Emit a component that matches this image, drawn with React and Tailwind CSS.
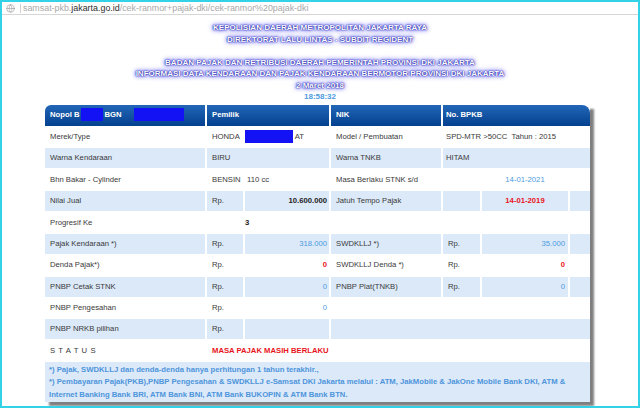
import React from "react";
import { Globe } from "lucide-react";

const GRID =
  "grid grid-cols-[160px_36px_84px_110px_37px_86px_20px] gap-x-[2px]";

function C({ span = 1, blue, children, align = "left", cls = "" }) {
  const spanCls = {
    1: "col-span-1",
    2: "col-span-2",
    3: "col-span-3",
    4: "col-span-4",
    6: "col-span-6",
  }[span];
  const alignCls =
    align === "right"
      ? "justify-end pr-[2px]"
      : align === "center"
      ? "justify-center"
      : "justify-start pl-[5px]";
  return (
    <div
      className={`${spanCls} h-[20px] flex items-center whitespace-nowrap ${alignCls} ${
        blue ? "bg-[#dce9f8]" : "bg-white"
      } ${cls}`}
    >
      {children}
    </div>
  );
}

function Redact({ w }) {
  return <span className="inline-block h-[13px] bg-[#1212f5]" style={{ width: w }} />;
}

export default function App() {
  const blueV = "text-[#4c9be0]";
  const red = "text-[#e8141c] font-bold";
  return (
    <div className="w-[640px] h-[408px] border-2 border-[#34d2e6] bg-white overflow-hidden font-['Liberation_Sans',Arial,sans-serif] text-[#3a3a3a]">
      {/* address bar */}
      <div className="h-[13px] border-b border-[#d6d6d6] flex items-center text-[8.9px] leading-none">
        <Globe size={9} className="ml-[4px] text-[#9a9a9a]" strokeWidth={1.6} />
        <span className="ml-[5px] mr-[2px] w-px h-[9px] bg-[#d0d0d0]" />
        <span className="text-[#a8a8a8]">
          samsat-pkb.<span className="text-[#2e2e2e]">jakarta.go.id</span>/cek-ranmor+pajak-dki/cek-ranmor%20pajak-dki
        </span>
      </div>

      {/* title */}
      <div className="pt-[7px] flex flex-col items-center text-[8px] leading-[11.5px] font-bold text-white [text-shadow:0_0_1px_#0a0a80,0_0_2px_#1a1ab8,0_0_4px_#4040f0,0_0_6px_#8080ff]">
        <div>KEPOLISIAN DAERAH METROPOLITAN JAKARTA RAYA</div>
        <div>DIREKTORAT LALU LINTAS - SUBDIT REGIDENT</div>
        <div className="h-[11.5px]" />
        <div>BADAN PAJAK DAN RETRIBUSI DAERAH PEMERINTAH PROVINSI DKI JAKARTA</div>
        <div>INFORMASI DATA KENDARAAN DAN PAJAK KENDARAAN BERMOTOR PROVINSI DKI JAKARTA</div>
        <div>2 Maret 2018</div>
        <div className="text-[#4c9be0] [text-shadow:none]">18:58:32</div>
      </div>

      {/* table */}
      <div className="ml-[43px] mt-[2px] w-[545px] bg-white shadow-[4px_4px_2px_rgba(0,0,0,0.5)] text-[7.7px] leading-none">
        {/* header */}
        <div className={`${GRID} h-[21px] text-white font-bold`}>
          <div className="col-span-1 flex items-center pl-[5px] rounded-tl-[6px] bg-linear-to-b from-[#2266b8] to-[#03418e]">
            Nopol B
            <span className="ml-[2px]"><Redact w={22} /></span>
            <span className="ml-[1px]">BGN</span>
            <span className="ml-[12px]"><Redact w={50} /></span>
          </div>
          <div className="col-span-2 flex items-center pl-[5px] bg-linear-to-b from-[#2266b8] to-[#03418e]">Pemilik</div>
          <div className="col-span-1 flex items-center pl-[5px] bg-linear-to-b from-[#2266b8] to-[#03418e]">NIK</div>
          <div className="col-span-3 flex items-center pl-[3px] rounded-tr-[8px] bg-linear-to-b from-[#2266b8] to-[#03418e]">No. BPKB</div>
        </div>

        <div className="flex flex-col gap-y-[1.375px] pt-[1.375px]">
          <div className={GRID}>
            <C>Merek/Type</C>
            <C span={2}>
              HONDA<span className="ml-[5px] mr-[2px]"><Redact w={48} /></span>AT
            </C>
            <C>Model / Pembuatan</C>
            <C span={3} cls="!pl-[3px]">SPD-MTR &gt;50CC&nbsp;&nbsp;Tahun : 2015</C>
          </div>
          <div className={GRID}>
            <C blue>Warna Kendaraan</C>
            <C blue span={2}>BIRU</C>
            <C blue>Warna TNKB</C>
            <C blue span={3} cls="!pl-[3px]">HITAM</C>
          </div>
          <div className={GRID}>
            <C>Bhn Bakar - Cylinder</C>
            <C span={2}>BENSIN&nbsp;&nbsp;&nbsp;110 cc</C>
            <C>Masa Berlaku STNK s/d</C>
            <C />
            <C align="center" cls={blueV}>14-01-2021</C>
            <C />
          </div>
          <div className={GRID}>
            <C blue>Nilai Jual</C>
            <C blue>Rp.</C>
            <C blue align="right" cls="font-bold text-[#222]">10.600.000</C>
            <C blue>Jatuh Tempo Pajak</C>
            <C blue />
            <C blue align="center" cls={red}>14-01-2019</C>
            <C blue />
          </div>
          <div className={GRID}>
            <C>Progresif Ke</C>
            <C />
            <C cls="!pl-0 font-bold text-[#222]">3</C>
            <C span={4} />
          </div>
          <div className={GRID}>
            <C blue>Pajak Kendaraan *)</C>
            <C blue>Rp.</C>
            <C blue align="right" cls={blueV}>318.000</C>
            <C blue>SWDKLLJ *)</C>
            <C blue>Rp.</C>
            <C blue align="right" cls={`${blueV} !pr-[3px]`}>35.000</C>
            <C blue />
          </div>
          <div className={GRID}>
            <C>Denda Pajak*)</C>
            <C>Rp.</C>
            <C align="right" cls={red}>0</C>
            <C>SWDKLLJ Denda *)</C>
            <C>Rp.</C>
            <C align="right" cls={`${red} !pr-[3px]`}>0</C>
            <C />
          </div>
          <div className={GRID}>
            <C blue>PNBP Cetak STNK</C>
            <C blue>Rp.</C>
            <C blue align="right" cls={blueV}>0</C>
            <C blue>PNBP Plat(TNKB)</C>
            <C blue>Rp.</C>
            <C blue align="right" cls={`${blueV} !pr-[3px]`}>0</C>
            <C blue />
          </div>
          <div className={GRID}>
            <C>PNBP Pengesahan</C>
            <C>Rp.</C>
            <C align="right" cls={blueV}>0</C>
            <C span={4} />
          </div>
          <div className={GRID}>
            <C blue>PNBP NRKB pilihan</C>
            <C blue>Rp.</C>
            <C blue />
            <C blue span={4} />
          </div>
          <div className={GRID}>
            <C cls="tracking-[0.6px]">S T A T U S</C>
            <C span={6} cls={red}>MASA PAJAK MASIH BERLAKU</C>
          </div>
        </div>

        {/* footer */}
        <div className="mt-[1px] bg-[#dce9f8] pl-[4px] pt-[2px] pb-[0.5px] text-[7.7px] leading-[12.5px] font-bold text-[#4e95dc] whitespace-nowrap">
          <div>*) Pajak, SWDKLLJ dan denda-denda hanya perhitungan 1 tahun terakhir.,</div>
          <div>*) Pembayaran Pajak(PKB),PNBP Pengesahan &amp; SWDKLLJ e-Samsat DKI Jakarta melalui : ATM, JakMobile &amp; JakOne Mobile Bank DKI, ATM &amp;</div>
          <div>Internet Banking Bank BRI, ATM Bank BNI, ATM Bank BUKOPIN &amp; ATM Bank BTN.</div>
        </div>
      </div>
    </div>
  );
}
